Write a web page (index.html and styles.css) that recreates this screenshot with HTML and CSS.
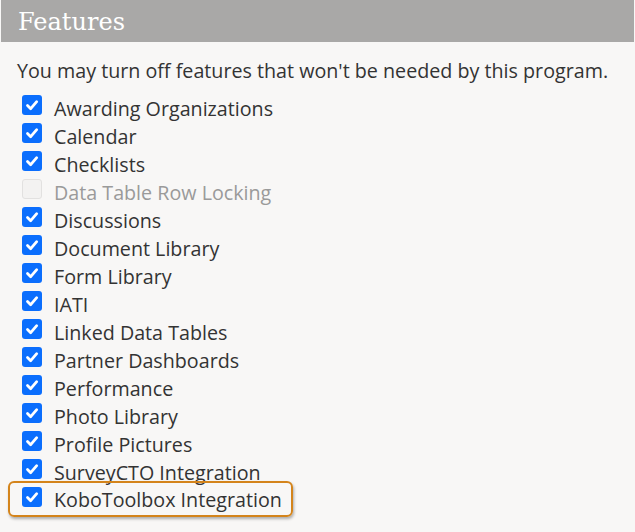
FILE: index.html
```html
<!DOCTYPE html>
<html>
<head>
<meta charset="utf-8">
<link rel="stylesheet" href="styles.css">
</head>
<body>
<div class="panel">
  <div class="header"><h2 class="title">Features</h2></div>
  <div class="content">
    <p class="intro">You may turn off features that won't be needed by this program.</p>
    <ul class="features">
      <li class="item"><span class="box on"><svg viewBox="0 0 20 20"><path d="M5.5 10.5l3.2 3.2 6-7"/></svg></span><span class="label">Awarding Organizations</span></li>
      <li class="item"><span class="box on"><svg viewBox="0 0 20 20"><path d="M5.5 10.5l3.2 3.2 6-7"/></svg></span><span class="label">Calendar</span></li>
      <li class="item"><span class="box on"><svg viewBox="0 0 20 20"><path d="M5.5 10.5l3.2 3.2 6-7"/></svg></span><span class="label">Checklists</span></li>
      <li class="item disabled"><span class="box off"></span><span class="label">Data Table Row Locking</span></li>
      <li class="item"><span class="box on"><svg viewBox="0 0 20 20"><path d="M5.5 10.5l3.2 3.2 6-7"/></svg></span><span class="label">Discussions</span></li>
      <li class="item"><span class="box on"><svg viewBox="0 0 20 20"><path d="M5.5 10.5l3.2 3.2 6-7"/></svg></span><span class="label">Document Library</span></li>
      <li class="item"><span class="box on"><svg viewBox="0 0 20 20"><path d="M5.5 10.5l3.2 3.2 6-7"/></svg></span><span class="label">Form Library</span></li>
      <li class="item"><span class="box on"><svg viewBox="0 0 20 20"><path d="M5.5 10.5l3.2 3.2 6-7"/></svg></span><span class="label">IATI</span></li>
      <li class="item"><span class="box on"><svg viewBox="0 0 20 20"><path d="M5.5 10.5l3.2 3.2 6-7"/></svg></span><span class="label">Linked Data Tables</span></li>
      <li class="item"><span class="box on"><svg viewBox="0 0 20 20"><path d="M5.5 10.5l3.2 3.2 6-7"/></svg></span><span class="label">Partner Dashboards</span></li>
      <li class="item"><span class="box on"><svg viewBox="0 0 20 20"><path d="M5.5 10.5l3.2 3.2 6-7"/></svg></span><span class="label">Performance</span></li>
      <li class="item"><span class="box on"><svg viewBox="0 0 20 20"><path d="M5.5 10.5l3.2 3.2 6-7"/></svg></span><span class="label">Photo Library</span></li>
      <li class="item"><span class="box on"><svg viewBox="0 0 20 20"><path d="M5.5 10.5l3.2 3.2 6-7"/></svg></span><span class="label">Profile Pictures</span></li>
      <li class="item"><span class="box on"><svg viewBox="0 0 20 20"><path d="M5.5 10.5l3.2 3.2 6-7"/></svg></span><span class="label">SurveyCTO Integration</span></li>
      <li class="item highlight"><span class="box on"><svg viewBox="0 0 20 20"><path d="M5.5 10.5l3.2 3.2 6-7"/></svg></span><span class="label">KoboToolbox Integration</span></li>
    </ul>
  </div>
</div>
</body>
</html>
```

FILE: styles.css
```css
html, body {
  margin: 0;
  padding: 0;
  background: #f8f7f6;
}
body {
  font-family: "Open Sans", "Liberation Sans", sans-serif;
  color: #333;
  width: 635px;
  height: 532px;
  overflow: hidden;
}
.panel {
  display: flex;
  flex-direction: column;
}
.header {
  background: #a9a8a7;
  height: 42px;
  display: flex;
  align-items: center;
  padding-left: 17px;
  margin-left: 1px;
  margin-right: 1px;
}
.title {
  margin: 0;
  font-family: "DejaVu Serif", "Liberation Serif", serif;
  font-weight: normal;
  font-size: 24px;
  color: #fff;
  line-height: 32px;
  padding-top: 1px;
}
.content {
  padding: 15px 0 0 17px;
}
.intro {
  margin: 0;
  font-size: 19.7px;
  line-height: 28px;
}
.features {
  list-style: none;
  margin: 10px 0 0 5px;
  padding: 0;
}
.item {
  display: flex;
  align-items: flex-start;
  font-size: 19.7px;
  line-height: 28px;
  height: 28px;
}
.box {
  width: 20px;
  height: 20px;
  border-radius: 3px;
  margin-top: 0;
  margin-right: 12px;
  flex: none;
  display: flex;
  box-sizing: border-box;
}
.box.on {
  background: #0b6efd;
}
.box svg {
  width: 20px;
  height: 20px;
  fill: none;
  stroke: #fff;
  stroke-width: 2.8;
  stroke-linecap: round;
  stroke-linejoin: round;
}
.box.off {
  background: #f3f2f1;
  border: 1px solid #e2e1e0;
}
.disabled .label {
  color: #9a9a9a;
}
.highlight {
  align-self: flex-start;
  display: inline-flex;
  height: auto;
  margin: -6px 0 0 -14px;
  padding: 3px 9px 1px 12px;
  border: 2px solid #d4841b;
  border-radius: 6px;
  box-shadow: 1px 2px 3px rgba(0, 0, 0, 0.3);
}
.highlight .box {
  margin-top: 1px;
}
```
